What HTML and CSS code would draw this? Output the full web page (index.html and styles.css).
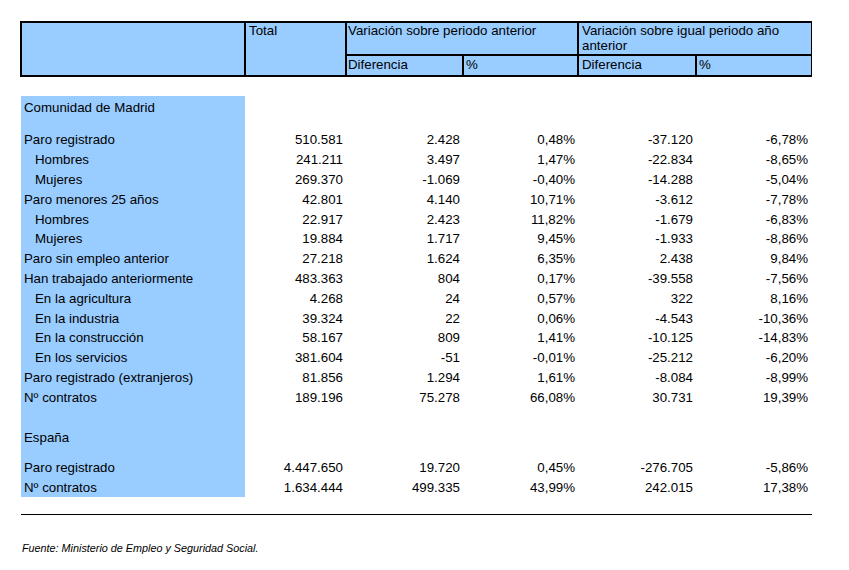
FILE: index.html
```html
<!DOCTYPE html>
<html lang="es">
<head>
<meta charset="utf-8">
<title>Paro registrado</title>
<link rel="stylesheet" href="styles.css">
</head>
<body>
<div class="page">
  <div class="head">
    <div class="h h-lbl"></div>
    <div class="h h-tot">Total</div>
    <div class="h h-var1">Variación sobre periodo anterior</div>
    <div class="h h-var2">Variación sobre igual periodo año anterior</div>
    <div class="h h-d1">Diferencia</div>
    <div class="h h-p1">%</div>
    <div class="h h-d2">Diferencia</div>
    <div class="h h-p2">%</div>
  </div>

  <div class="data">
    <div class="r title"><div class="l">Comunidad de Madrid</div></div>
    <div class="r sp1"><div class="l"></div></div>
    <div class="r"><div class="l">Paro registrado</div><div class="n">510.581</div><div class="n">2.428</div><div class="n">0,48%</div><div class="n">-37.120</div><div class="n">-6,78%</div></div>
    <div class="r"><div class="l ind">Hombres</div><div class="n">241.211</div><div class="n">3.497</div><div class="n">1,47%</div><div class="n">-22.834</div><div class="n">-8,65%</div></div>
    <div class="r"><div class="l ind">Mujeres</div><div class="n">269.370</div><div class="n">-1.069</div><div class="n">-0,40%</div><div class="n">-14.288</div><div class="n">-5,04%</div></div>
    <div class="r"><div class="l">Paro menores 25 años</div><div class="n">42.801</div><div class="n">4.140</div><div class="n">10,71%</div><div class="n">-3.612</div><div class="n">-7,78%</div></div>
    <div class="r"><div class="l ind">Hombres</div><div class="n">22.917</div><div class="n">2.423</div><div class="n">11,82%</div><div class="n">-1.679</div><div class="n">-6,83%</div></div>
    <div class="r"><div class="l ind">Mujeres</div><div class="n">19.884</div><div class="n">1.717</div><div class="n">9,45%</div><div class="n">-1.933</div><div class="n">-8,86%</div></div>
    <div class="r"><div class="l">Paro sin empleo anterior</div><div class="n">27.218</div><div class="n">1.624</div><div class="n">6,35%</div><div class="n">2.438</div><div class="n">9,84%</div></div>
    <div class="r"><div class="l">Han trabajado anteriormente</div><div class="n">483.363</div><div class="n">804</div><div class="n">0,17%</div><div class="n">-39.558</div><div class="n">-7,56%</div></div>
    <div class="r"><div class="l ind">En la agricultura</div><div class="n">4.268</div><div class="n">24</div><div class="n">0,57%</div><div class="n">322</div><div class="n">8,16%</div></div>
    <div class="r"><div class="l ind">En la industria</div><div class="n">39.324</div><div class="n">22</div><div class="n">0,06%</div><div class="n">-4.543</div><div class="n">-10,36%</div></div>
    <div class="r"><div class="l ind">En la construcción</div><div class="n">58.167</div><div class="n">809</div><div class="n">1,41%</div><div class="n">-10.125</div><div class="n">-14,83%</div></div>
    <div class="r"><div class="l ind">En los servicios</div><div class="n">381.604</div><div class="n">-51</div><div class="n">-0,01%</div><div class="n">-25.212</div><div class="n">-6,20%</div></div>
    <div class="r"><div class="l">Paro registrado (extranjeros)</div><div class="n">81.856</div><div class="n">1.294</div><div class="n">1,61%</div><div class="n">-8.084</div><div class="n">-8,99%</div></div>
    <div class="r"><div class="l">Nº contratos</div><div class="n">189.196</div><div class="n">75.278</div><div class="n">66,08%</div><div class="n">30.731</div><div class="n">19,39%</div></div>
    <div class="r sp2"><div class="l"></div></div>
    <div class="r"><div class="l">España</div></div>
    <div class="r sp3"><div class="l"></div></div>
    <div class="r"><div class="l">Paro registrado</div><div class="n">4.447.650</div><div class="n">19.720</div><div class="n">0,45%</div><div class="n">-276.705</div><div class="n">-5,86%</div></div>
    <div class="r"><div class="l">Nº contratos</div><div class="n">1.634.444</div><div class="n">499.335</div><div class="n">43,99%</div><div class="n">242.015</div><div class="n">17,38%</div></div>
  </div>

  <div class="rule"></div>
  <p class="foot">Fuente: Ministerio de Empleo y Seguridad Social.</p>
</div>
</body>
</html>
```
FILE: styles.css
```css
* { box-sizing: border-box; }

body {
  margin: 0;
  background: #ffffff;
  color: #000000;
  font-family: "Liberation Sans", Arial, sans-serif;
  font-size: 13.3px;
}

.page {
  padding-top: 21px;
}

/* Header block */
.head {
  margin-left: 20px;
  width: 792px;
  display: grid;
  grid-template-columns: 224px 101px 117px 115px 118px 114px;
  grid-template-rows: 33px 19px;
  background: #99ccff;
  border: 2px solid #000000;
  border-right-width: 1px;
}

.h {
  line-height: 15px;
  padding: 0 2px;
  border-right: 2px solid #000000;
  white-space: nowrap;
}

.h-lbl { grid-column: 1; grid-row: 1 / span 2; }
.h-tot { grid-column: 2; grid-row: 1 / span 2; padding-left: 3px; }
.h-var1 {
  grid-column: 3 / span 2;
  grid-row: 1;
  border-bottom: 2px solid #000000;
  padding-left: 1px;
}
.h-var2 {
  grid-column: 5 / span 2;
  grid-row: 1;
  border-bottom: 2px solid #000000;
  border-right: 0;
  white-space: normal;
  padding-left: 3px;
}
.h-d1 { grid-column: 3; grid-row: 2; padding-left: 1px; padding-top: 1px; }
.h-p1 { grid-column: 4; grid-row: 2; padding-top: 1px; }
.h-d2 { grid-column: 5; grid-row: 2; padding-left: 3px; padding-top: 1px; }
.h-p2 { grid-column: 6; grid-row: 2; border-right: 0; padding-top: 1px; }

/* Data block */
.data {
  margin: 19px 0 0 21px;
  width: 791px;
}

.r {
  display: grid;
  grid-template-columns: 224px 102px 117px 115px 118px 115px;
  height: 19.8px;
}

.r .l,
.r .n {
  line-height: 17.8px;
  padding-top: 2px;
  white-space: nowrap;
}

.r .l {
  background: #99ccff;
  padding-left: 3px;
}

.r .l.ind { padding-left: 14px; }

.r .n {
  text-align: right;
  padding-right: 4px;
}

.r.title { height: 21.4px; }
.r.title .l { line-height: 19.4px; }
.r.sp1 { height: 12px; }
.r.sp2 { height: 20.2px; }
.r.sp3 { height: 10.8px; }

.rule {
  margin: 17px 0 0 21px;
  width: 791px;
  border-top: 1px solid #000000;
}

.foot {
  margin: 27px 0 0 22px;
  font-style: italic;
  font-size: 10.8px;
}
```
